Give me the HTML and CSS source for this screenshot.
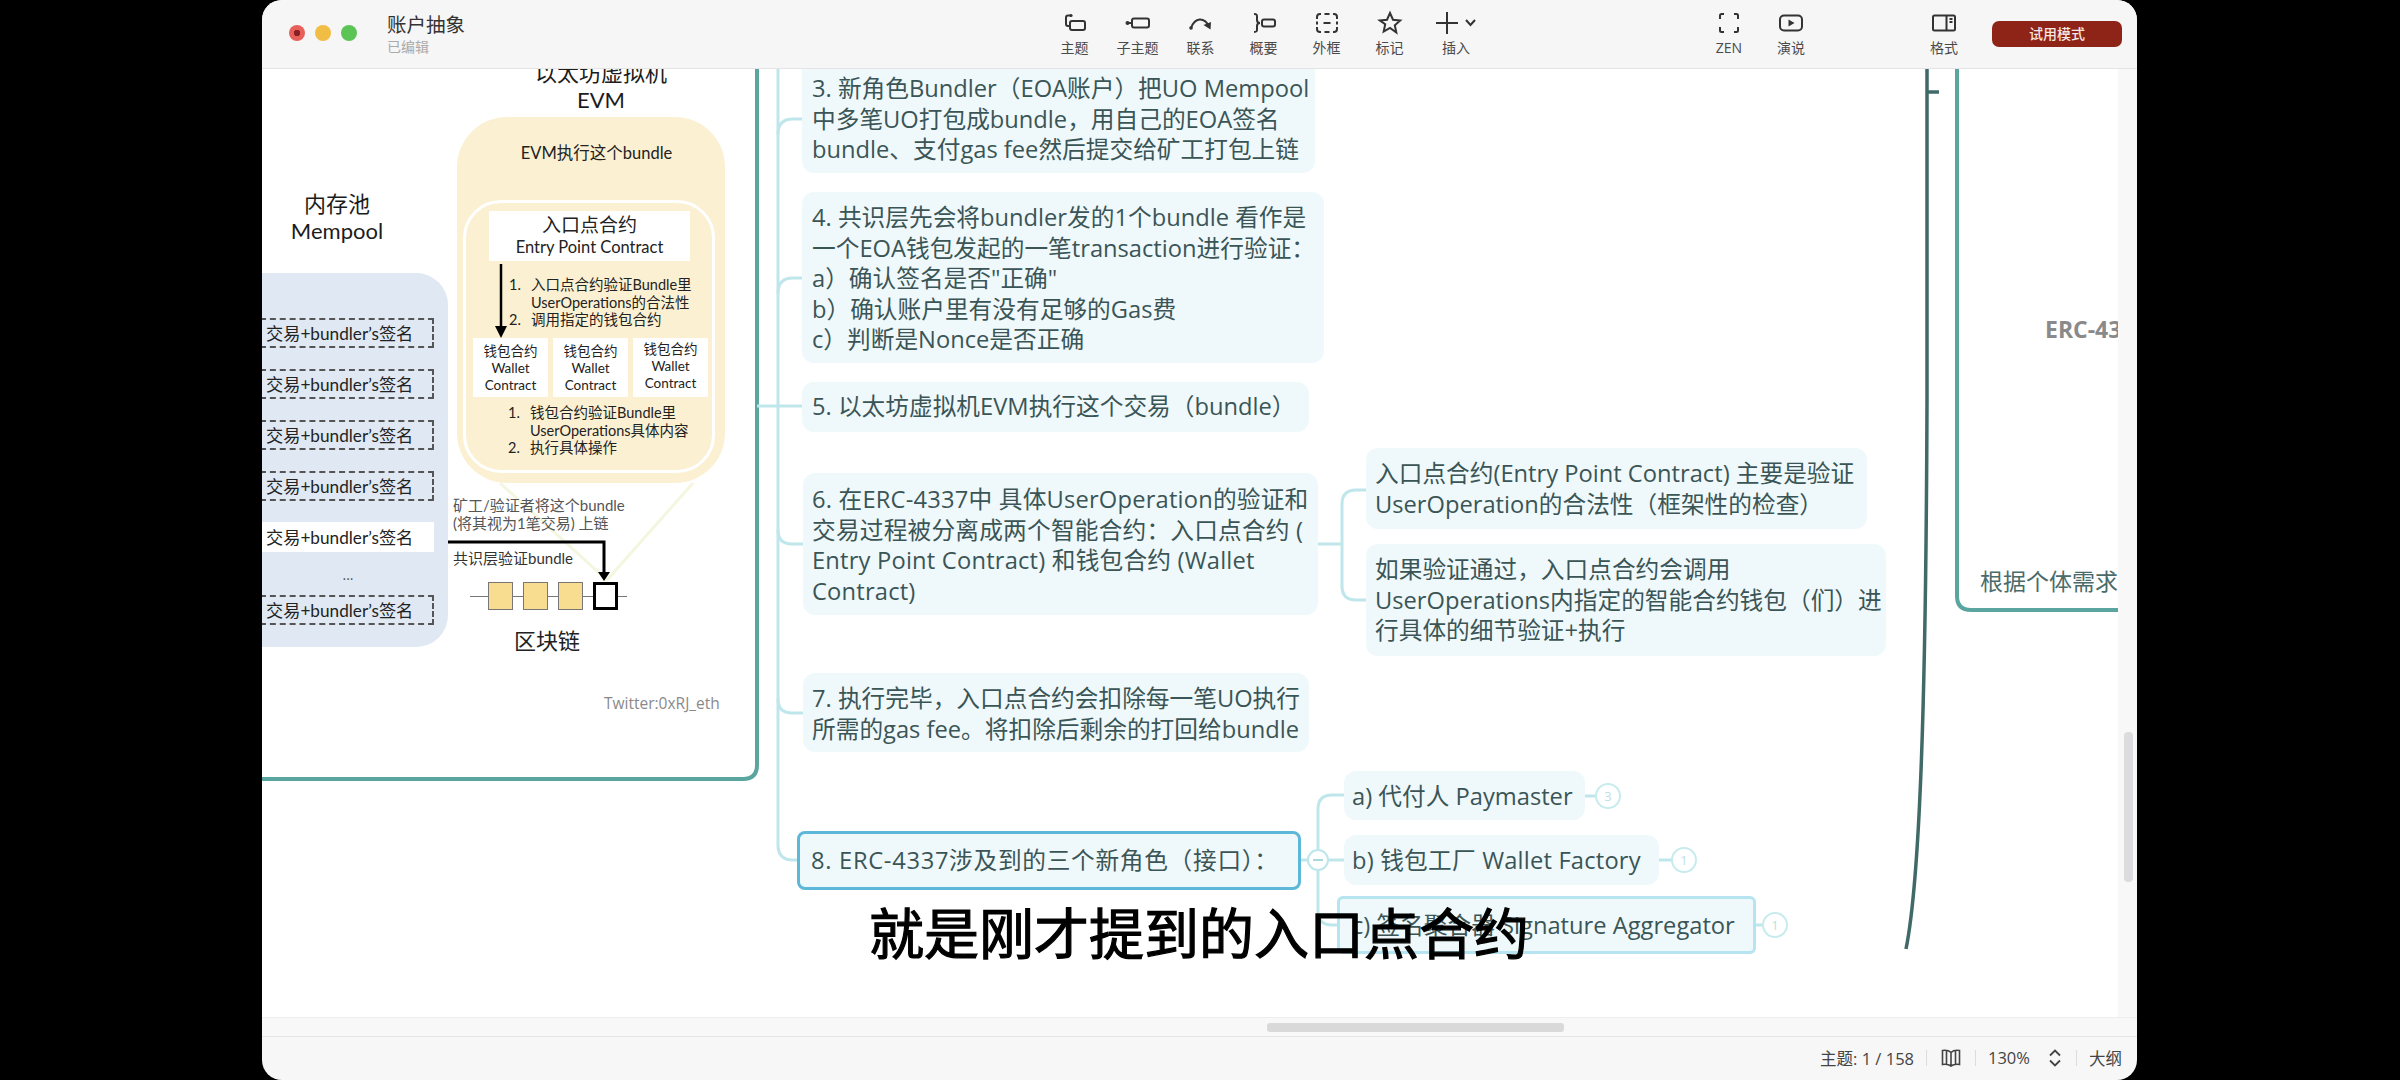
FILE: index.html
```html
<!DOCTYPE html>
<html>
<head>
  <meta charset="utf-8">
  <title>账户抽象</title>
  <link rel="stylesheet" href="styles.css">
</head>
<body>

<div class="window">

  <!-- 标题栏 -->
  <div class="titlebar">
    <div class="lights">
      <span class="light red"></span>
      <span class="light yellow"></span>
      <span class="light green"></span>
    </div>
    <div class="doc">
      <div class="doc-name">账户抽象</div>
      <div class="doc-state">已编辑</div>
    </div>

    <div class="tools tools-main">
      <div class="tool">
        <svg class="ico" viewBox="0 0 24 24"><circle cx="8" cy="4.5" r="1.6" class="solid"/><path d="M8 4.5H5a2 2 0 0 0-2 2V13a2 2 0 0 0 2 2h2"/><rect x="7" y="10" width="15" height="9" rx="2"/></svg>
        <span>主题</span>
      </div>
      <div class="tool">
        <svg class="ico" viewBox="0 0 24 24"><circle cx="1.5" cy="12" r="2" class="solid"/><path d="M2 12h4"/><rect x="6" y="7.5" width="17" height="9" rx="2"/></svg>
        <span>子主题</span>
      </div>
      <div class="tool">
        <svg class="ico" viewBox="0 0 24 24"><circle cx="2" cy="17" r="1.8" class="solid"/><path d="M2 17C6 6 15 6 20 15"/><path d="M14.500 14l7 4.500.5-7.500z" class="solid"/></svg>
        <span>联系</span>
      </div>
      <div class="tool">
        <svg class="ico" viewBox="0 0 24 24"><path d="M2 3c3 0 3 1 3 3v3c0 2 1 3 3 3-2 0-3 1-3 3v3c0 2 0 3-3 3"/><rect x="10" y="8.5" width="13" height="7" rx="2"/></svg>
        <span>概要</span>
      </div>
      <div class="tool">
        <svg class="ico" viewBox="0 0 24 24"><path d="M6 3H5a3 3 0 0 0-3 3v2M18 3h1a3 3 0 0 1 3 3v2M6 21H5a3 3 0 0 1-3-3v-2M18 21h1a3 3 0 0 0 3-3v-2M9.5 3h5M9.5 21h5M2 10.5v3M22 10.5v3M8.5 12h7"/></svg>
        <span>外框</span>
      </div>
      <div class="tool">
        <svg class="ico" viewBox="0 0 24 24"><path d="M12 2l3 6.700 7.200.8-5.400 4.800 1.500 7.200L12 17l-6.300 3.500 1.500-7.200L1.800 9.500 9 8.700z"/></svg>
        <span>标记</span>
      </div>
      <div class="tool tool-insert">
        <svg class="ico ico-wide" viewBox="0 0 40 24"><path d="M0 12h22M11 1v22M30 9l4.500 5 4.500-5"/></svg>
        <span>插入</span>
      </div>
    </div>

    <div class="tools tools-view">
      <div class="tool">
        <svg class="ico" viewBox="0 0 24 24"><path d="M7 3H4.500A1.500 1.500 0 0 0 3 4.500V8M17 3h2.500A1.500 1.500 0 0 1 21 4.500V8M7 21H4.500A1.500 1.500 0 0 1 3 19.500V16M17 21h2.500a1.500 1.500 0 0 0 1.500-1.500V16"/></svg>
        <span>ZEN</span>
      </div>
      <div class="tool">
        <svg class="ico" viewBox="0 0 24 24"><rect x="1" y="4.500" width="22" height="15" rx="4"/><path d="M9.500 8.500v7l6-3.500z" class="solid"/></svg>
        <span>演说</span>
      </div>
    </div>

    <div class="tools tools-format">
      <div class="tool">
        <svg class="ico" viewBox="0 0 24 24"><rect x="1" y="4.500" width="22" height="15" rx="1.500"/><path d="M14.500 4.500v15M17.500 8h3M17.500 11h3"/></svg>
        <span>格式</span>
      </div>
    </div>

    <div class="trial">试用模式</div>
  </div>

  <div class="middle">
    <!-- 导图画布 -->
    <div class="canvas">
      <svg class="lines" viewBox="262 69 1856 948">
        <path class="frame" d="M757 66V765q0 14-14 14H250"/>
        <path class="frame" d="M1957 66V596q0 14 14 14H2130"/>
        <path class="trunk" d="M1927 66V400C1926 700 1920 880 1906 949"/>
        <path class="trunk" d="M1927 92h12"/>

        <path class="branch" d="M778 66V845q0 15 15 15h6"/>
        <path class="branch" d="M778 134q0-15 15-15h9"/>
        <path class="branch" d="M778 293q0-15 15-15h9"/>
        <path class="branch" d="M757 406h45"/>
        <path class="branch" d="M778 530q0 14 14 14h11"/>
        <path class="branch" d="M778 699q0 14 14 14h11"/>
        <path class="branch" d="M1318 544h24"/>
        <path class="branch" d="M1366 490h-10q-14 0-14 14v82q0 14 14 14h10"/>
        <path class="branch" d="M1301 860h43"/>
        <path class="branch" d="M1344 795h-12q-14 0-14 14v102q0 14 14 14h5"/>
        <path class="branch" d="M1585 796h12M1659 860h14M1756 925h8"/>

        <path class="funnel" d="M500 483L607 580L693 483"/>
        <path class="send" d="M436 542H604V574"/>
        <path class="send-head" d="M598 572h12l-6 9z"/>
      </svg>

      <!-- 左边的示意图 -->
      <div class="slide-title mempool-title">内存池<br>Mempool</div>
      <div class="mempool">
        <div class="tx">交易+bundler’s签名</div>
        <div class="tx">交易+bundler’s签名</div>
        <div class="tx">交易+bundler’s签名</div>
        <div class="tx">交易+bundler’s签名</div>
        <div class="tx tx-picked">交易+bundler’s签名</div>
        <div class="tx-more">...</div>
        <div class="tx">交易+bundler’s签名</div>
      </div>

      <div class="slide-title evm-title">以太坊虚拟机<br>EVM</div>
      <div class="evm">
        <div class="evm-run">EVM执行这个bundle</div>
        <div class="evm-frame">
          <div class="entry">
            <div class="entry-zh">入口点合约</div>
            <div class="entry-en">Entry Point Contract</div>
          </div>
          <div class="entry-flow">
            <svg class="flow-arrow" viewBox="0 0 12 74"><path d="M6 0V64" class="flow-line"/><path d="M0 62h12l-6 12z"/></svg>
            <div class="steps">
              <div class="step"><b>1.</b><span>入口点合约验证Bundle里<br>UserOperations的合法性</span></div>
              <div class="step"><b>2.</b><span>调用指定的钱包合约</span></div>
            </div>
          </div>
          <div class="wallets">
            <div class="wallet">钱包合约<br>Wallet<br>Contract</div>
            <div class="wallet">钱包合约<br>Wallet<br>Contract</div>
            <div class="wallet wallet-up">钱包合约<br>Wallet<br>Contract</div>
          </div>
          <div class="steps steps-wallet">
            <div class="step"><b>1.</b><span>钱包合约验证Bundle里<br>UserOperations具体内容</span></div>
            <div class="step"><b>2.</b><span>执行具体操作</span></div>
          </div>
        </div>
      </div>

      <div class="miner-note">矿工/验证者将这个bundle<br>(将其视为1笔交易) 上链</div>
      <div class="consensus-note">共识层验证bundle</div>

      <div class="chain">
        <span class="block"></span>
        <span class="block"></span>
        <span class="block"></span>
        <span class="block block-new"></span>
      </div>
      <div class="chain-name">区块链</div>
      <div class="credit">Twitter:0xRJ_eth</div>

      <!-- 节点 -->
      <div class="node n3">3. 新角色Bundler（EOA账户）把UO Mempool<br>中多笔UO打包成bundle，用自己的EOA签名<br>bundle、支付gas fee然后提交给矿工打包上链</div>
      <div class="node n4">4. 共识层先会将bundler发的1个bundle 看作是<br>一个EOA钱包发起的一笔transaction进行验证：<br>a）确认签名是否"正确"<br>b）确认账户里有没有足够的Gas费<br>c）判断是Nonce是否正确</div>
      <div class="node n5">5. 以太坊虚拟机EVM执行这个交易（bundle）</div>
      <div class="node n6">6. 在ERC-4337中 具体UserOperation的验证和<br>交易过程被分离成两个智能合约：入口点合约 (<br>Entry Point Contract) 和钱包合约 (Wallet<br>Contract)</div>
      <div class="node n6a">入口点合约(Entry Point Contract) 主要是验证<br>UserOperation的合法性（框架性的检查）</div>
      <div class="node n6b">如果验证通过，入口点合约会调用<br>UserOperations内指定的智能合约钱包（们）进<br>行具体的细节验证+执行</div>
      <div class="node n7">7. 执行完毕，入口点合约会扣除每一笔UO执行<br>所需的gas fee。将扣除后剩余的打回给bundle</div>
      <div class="node n8">8. ERC-4337涉及到的三个新角色（接口）：</div>
      <div class="fold"></div>
      <div class="node n8a">a) 代付人 Paymaster</div>
      <div class="count c8a">3</div>
      <div class="node n8b">b) 钱包工厂 Wallet Factory</div>
      <div class="count c8b">1</div>
      <div class="node n8c">c) 签名聚合器 Signature Aggregator</div>
      <div class="count c8c">1</div>

      <div class="far-title">ERC-4337</div>
      <div class="far-note">根据个体需求定制</div>

      <div class="subtitle">就是刚才提到的入口点合约</div>
    </div>

    <div class="vscroll"><div class="vthumb"></div></div>
  </div>

  <div class="hscroll"><div class="hthumb"></div></div>

  <!-- 状态栏 -->
  <div class="statusbar">
    <span>主题: 1 / 158</span>
    <i class="sep"></i>
    <svg class="book" viewBox="0 0 20 18"><path d="M10 3.500C8 1.500 5 1 1.500 1.500v14C5 15 8 15.500 10 17c2-1.500 5-2 8.500-1.500v-14C15 1 12 1.500 10 3.500zM10 3.500V17M5.500 1.500v14M14.500 1.500v14"/></svg>
    <i class="sep"></i>
    <span class="zoom-val">130%</span>
    <svg class="updown" viewBox="0 0 12 18"><path d="M1 6.500L6 1.500l5 5M1 11.500l5 5 5-5"/></svg>
    <i class="sep"></i>
    <span>大纲</span>
  </div>
</div>

</body>
</html>
```

FILE: styles.css
```css
/* 全局 */
html, body {
  margin: 0;
  padding: 0;
  height: 100%;
  background: #000;
  overflow: hidden;
  font-family: "Open Sans", "Noto Sans CJK SC", sans-serif;
}

.window {
  width: 1875px;
  height: 1080px;
  margin-left: 262px;
  background: #f7f7f7;
  border-radius: 20px;
  overflow: hidden;
  display: flex;
  flex-direction: column;
}

/* 标题栏 */
.titlebar {
  height: 68px;
  flex: none;
  display: flex;
  align-items: flex-start;
  border-bottom: 1px solid #e4e4e4;
  background: #f6f6f6;
}

.lights {
  display: flex;
  gap: 10px;
  margin: 25px 0 0 27px;
}

.light {
  width: 16px;
  height: 16px;
  border-radius: 50%;
}
.red { background: radial-gradient(circle, #8a2020 0 3px, #e8605c 3.5px); }
.yellow { background: #f2bd45; }
.green { background: #5cc454; }

.doc {
  margin: 13px 0 0 30px;
  width: 78px;
}
.doc-name {
  font-size: 19.5px;
  line-height: 24px;
  color: #333;
}
.doc-state {
  font-size: 14px;
  line-height: 20px;
  color: #aaa;
}

.tools {
  display: flex;
  padding-top: 11px;
}
.tools-main { margin-left: 578px; }
.tools-view { margin-left: 207px; }
.tools-format { margin-left: 91px; }

.tool {
  width: 63px;
  display: flex;
  flex-direction: column;
  align-items: center;
  font-size: 14px;
  line-height: 18px;
  color: #4a4a4a;
}
.tools-view .tool, .tools-format .tool { width: 62px; }
.tool-insert { width: 70px; }
.tool span { margin-top: 4px; }

.ico {
  width: 24px;
  height: 24px;
  fill: none;
  stroke: #333;
  stroke-width: 2;
  overflow: visible;
}
.ico-wide { width: 40px; }
.ico .solid { fill: #333; stroke: none; }

.trial {
  width: 130px;
  height: 26px;
  margin: 21px 0 0 17px;
  border-radius: 7px;
  background: #8e2418;
  color: #f6e6e2;
  font-size: 14px;
  font-weight: 500;
  line-height: 26px;
  text-align: center;
}

.middle {
  flex: none;
  height: 948px;
  display: flex;
}

/* 画布上的东西都按导图坐标摆放 */
.canvas {
  position: relative;
  width: 1856px;
  height: 948px;
  background: #fff;
  overflow: hidden;
}

.lines {
  position: absolute;
  left: 0;
  top: 0;
  width: 1856px;
  height: 948px;
  fill: none;
}
.frame { stroke: #5ba5a0; stroke-width: 4; }
.trunk { stroke: #3f6a68; stroke-width: 3.5; }
.branch { stroke: #bfe6ea; stroke-width: 3; }
.funnel { stroke: #f4f6df; stroke-width: 3; }
.send { stroke: #000; stroke-width: 3; }
.send-head { fill: #000; }

/* 左边示意图 */
.slide-title {
  position: absolute;
  font-family: Lato, "Noto Sans CJK SC", sans-serif;
  color: #1c1c1c;
  text-align: center;
  white-space: nowrap;
}
.mempool-title {
  left: 15px;
  top: 121px;
  width: 120px;
  font-size: 22px;
  line-height: 27px;
}
.evm-title {
  left: 259px;
  top: -10px;
  width: 160px;
  font-size: 22px;
  line-height: 27px;
  z-index: 1;
}

.mempool {
  position: absolute;
  left: 0;
  top: 204px;
  width: 186px;
  height: 374px;
  padding-top: 45px;
  box-sizing: border-box;
  border-radius: 0 32px 32px 0;
  background: #dfe8f3;
  display: flex;
  flex-direction: column;
  gap: 21px;
}

.tx {
  width: 174px;
  height: 30px;
  margin-left: -2px;
  padding-left: 4px;
  box-sizing: border-box;
  border: 2px dashed #555;
  font-family: Lato, "Noto Sans CJK SC", sans-serif;
  font-size: 17.2px;
  line-height: 27px;
  color: #222;
  white-space: nowrap;
}
.tx-picked {
  border-color: #fff;
  background: #fff;
}
.tx-more {
  height: 17px;
  margin: -8px 0;
  width: 172px;
  text-align: center;
  font-size: 14px;
  line-height: 20px;
  color: #555;
}

.evm {
  position: absolute;
  left: 195px;
  top: 48px;
  width: 268px;
  height: 366px;
  padding-top: 26px;
  box-sizing: border-box;
  border-radius: 50px;
  background: #fbf0d2;
  font-family: Lato, "Noto Sans CJK SC", sans-serif;
  color: #222;
}
.evm-run {
  height: 20px;
  padding-left: 11px;
  text-align: center;
  font-size: 16.5px;
  line-height: 20px;
}
.evm-frame {
  width: 252px;
  height: 273px;
  margin: 37px 0 0 6px;
  border: 3px solid #fff;
  border-radius: 38px;
  box-sizing: border-box;
}
.entry {
  width: 201px;
  height: 50px;
  margin: 8px 0 0 23px;
  background: #fff;
  text-align: center;
}
.entry-zh { font-size: 19px; line-height: 27px; }
.entry-en { font-size: 16.5px; line-height: 19px; }

.entry-flow {
  display: flex;
  height: 77px;
}
.flow-arrow {
  width: 12px;
  height: 74px;
  margin: 3px 0 0 29px;
  flex: none;
}
.flow-line { stroke: #000; stroke-width: 2.5; }

.steps {
  font-size: 14.5px;
  line-height: 17.5px;
}
.entry-flow .steps { margin: 15px 0 0 2px; }
.steps-wallet { margin: 7px 0 0 42px; }
.step { display: flex; white-space: nowrap; }
.step b { width: 22px; flex: none; font-weight: 400; }

.wallets {
  display: flex;
  gap: 5px;
  margin-left: 7px;
}
.wallet {
  width: 75px;
  height: 59px;
  padding-top: 5px;
  box-sizing: border-box;
  background: #fff;
  text-align: center;
  font-size: 13.5px;
  line-height: 17px;
}
.wallet-up { padding-top: 3px; }

.miner-note, .consensus-note {
  position: absolute;
  left: 191px;
  font-size: 15px;
  line-height: 18px;
  white-space: nowrap;
  font-family: Lato, "Noto Sans CJK SC", sans-serif;
}
.miner-note { top: 427px; color: #555; }
.consensus-note { top: 480px; color: #333; }

.chain {
  position: absolute;
  left: 208px;
  top: 513px;
  width: 157px;
  height: 28px;
  padding-left: 18px;
  box-sizing: border-box;
  display: flex;
  gap: 10px;
  background: linear-gradient(#777, #777) center / 100% 1px no-repeat;
}
.block {
  width: 25px;
  height: 28px;
  box-sizing: border-box;
  border: 1px solid #777;
  background: #f8dc8f;
}
.block-new {
  border: 3px solid #000;
  background: #fff;
}

.chain-name {
  position: absolute;
  left: 235px;
  top: 555px;
  width: 100px;
  text-align: center;
  font-size: 22px;
  line-height: 32px;
  color: #222;
}
.credit {
  position: absolute;
  left: 342px;
  top: 624px;
  font-size: 15.5px;
  line-height: 20px;
  color: #8a8a8a;
  white-space: nowrap;
}

/* 导图节点 */
.node {
  position: absolute;
  box-sizing: border-box;
  padding-left: 10px;
  border-radius: 12px;
  background: #eff9fb;
  font-size: 23.7px;
  line-height: 30.5px;
  color: #3b5556;
  white-space: nowrap;
}
.n3 { left: 540px; top: 0; width: 513px; height: 104px; padding-top: 4px; border-radius: 0 0 12px 12px; }
.n4 { left: 540px; top: 123px; width: 522px; height: 171px; padding-top: 10px; }
.n5 { left: 540px; top: 313px; width: 507px; height: 50px; padding-top: 9px; }
.n6 { left: 541px; top: 404px; width: 515px; height: 142px; padding: 11px 0 0 9px; letter-spacing: .2px; }
.n6a { left: 1104px; top: 379px; width: 501px; height: 81px; padding: 10px 0 0 9px; }
.n6b { left: 1104px; top: 475px; width: 520px; height: 112px; padding: 10px 0 0 9px; }
.n7 { left: 541px; top: 604px; width: 506px; height: 79px; padding: 10px 0 0 9px; }
.n8 {
  left: 535px;
  top: 762px;
  width: 504px;
  height: 59px;
  padding: 11px 0 0 11px;
  border: 3px solid #5db7d8;
  border-radius: 8px;
  line-height: 30px;
  letter-spacing: .7px;
}
.n8a { left: 1082px; top: 702px; width: 241px; height: 49px; padding: 10px 0 0 8px; }
.n8b { left: 1082px; top: 766px; width: 315px; height: 50px; padding: 10px 0 0 8px; letter-spacing: .2px; }
.n8c {
  left: 1075px;
  top: 827px;
  width: 419px;
  height: 58px;
  padding: 11px 0 0 12px;
  border: 3px solid #b6e4f0;
  border-radius: 6px;
}

.fold {
  position: absolute;
  left: 1045px;
  top: 780px;
  width: 22px;
  height: 22px;
  box-sizing: border-box;
  border: 2px solid #bfe6ea;
  border-radius: 50%;
  background: #fff linear-gradient(#a9d8dc, #a9d8dc) center / 10px 2px no-repeat;
}

.count {
  position: absolute;
  width: 26px;
  height: 26px;
  box-sizing: border-box;
  border: 2px solid #c8ebee;
  border-radius: 50%;
  background: #fff;
  color: #bcdfe2;
  font-size: 13px;
  line-height: 22px;
  text-align: center;
}
.c8a { left: 1333px; top: 714px; }
.c8b { left: 1409px; top: 778px; }
.c8c { left: 1500px; top: 843px; }

.far-title {
  position: absolute;
  left: 1783px;
  top: 244px;
  font-size: 23px;
  line-height: 32px;
  font-weight: 700;
  color: #8a8a8a;
  white-space: nowrap;
}
.far-note {
  position: absolute;
  left: 1718px;
  top: 496px;
  font-size: 23px;
  line-height: 32px;
  color: #4a6b6a;
  white-space: nowrap;
}

.subtitle {
  position: absolute;
  left: 607px;
  top: 824px;
  font-size: 55px;
  line-height: 80px;
  font-weight: 400;
  -webkit-text-stroke: 1.2px #000;
  color: #000;
  white-space: nowrap;
}

/* 滚动条 */
.vscroll {
  flex: 1;
  background: #f8f8f9;
  padding: 663px 0 0 6px;
  box-sizing: border-box;
}
.vthumb {
  width: 9px;
  height: 150px;
  border-radius: 4px;
  background: #dcdcdf;
}

.hscroll {
  height: 20px;
  flex: none;
  box-sizing: border-box;
  padding: 5px 0 0 1005px;
  border-top: 1px solid #eee;
  border-bottom: 1px solid #e6e6e6;
  background: #f8f8f8;
}
.hthumb {
  width: 297px;
  height: 9px;
  border-radius: 3px;
  background: #d9d9d9;
}

/* 状态栏 */
.statusbar {
  flex: 1;
  display: flex;
  align-items: center;
  justify-content: flex-end;
  padding: 0 15px 2px 0;
  font-size: 16.5px;
  color: #444;
  white-space: nowrap;
}
.sep {
  width: 1px;
  height: 16px;
  margin: 0 12px;
  background: #ddd;
}
.book {
  width: 20px;
  height: 18px;
  margin: 0 2px;
  fill: none;
  stroke: #444;
  stroke-width: 1.6;
}
.zoom-val { width: 46px; }
.updown {
  width: 12px;
  height: 18px;
  margin-left: 15px;
  margin-right: 3px;
  fill: none;
  stroke: #444;
  stroke-width: 1.8;
}
```
